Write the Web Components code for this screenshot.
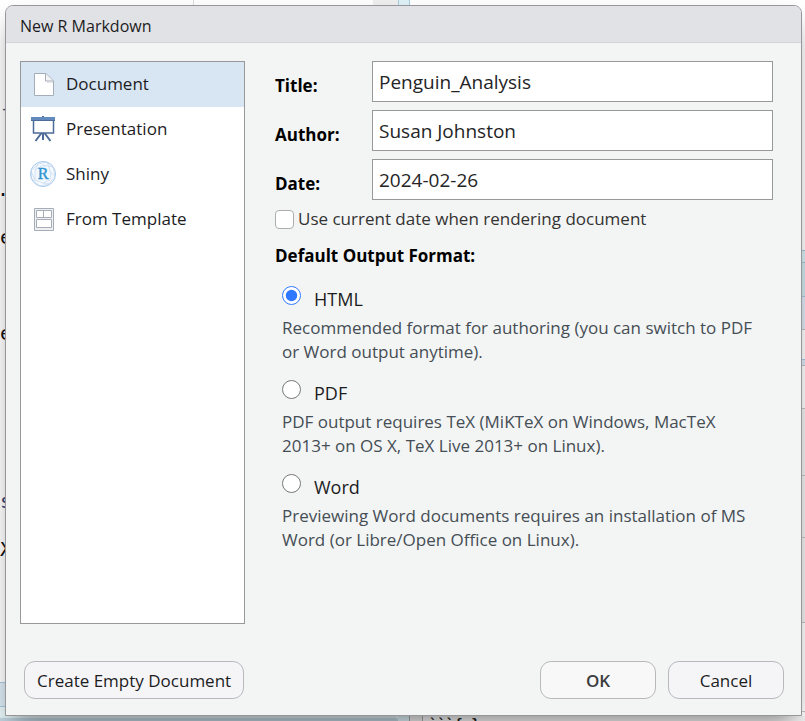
<!DOCTYPE html>
<html lang="en">
<head>
<meta charset="utf-8">
<title>New R Markdown</title>
<style>
html, body { height: 100%; margin: 0; }
body { font-family: "Open Sans", "Noto Sans", sans-serif; font-size: 17px; color: #1c1c1e; background: #fff; overflow: hidden; }
</style>
</head>
<body>
<app-window></app-window>
<script>
const define = (name, html, setup) => {
  const template = document.createElement('template');
  template.innerHTML = html;
  customElements.define(name, class extends HTMLElement {
    constructor() {
      super();
      this.attachShadow({ mode: 'open' }).append(template.content.cloneNode(true));
    }
    connectedCallback() { if (setup) setup(this, this.shadowRoot); }
  });
};

define('ide-backdrop', `
<style>
:host { display: grid; grid-template: 5px 1fr 5px / 6px 1fr 3px; overflow: hidden; background: #fff; }
.top, .bottom { grid-column: 1 / -1; display: flex; overflow: hidden; }
.top i, .bottom i, .right i { display: block; box-sizing: border-box; }
.code { font: 20px/24px "DejaVu Sans Mono", monospace; color: #111; white-space: pre; overflow: hidden; min-height: 0; display: flex; flex-direction: column; padding-top: 4px; }
.code span { display: block; height: 24px; flex: none; }
.code .kw { color: #3b4475; }
.code .dot { text-indent: -3px; }
.code .pane { flex: 1; border-top: 1px solid #a9c8df; background: #dcebf5; margin-top: 121px; }
.code .pane i { display: block; margin-top: 23px; border-top: 1px solid #a9c8df; background: #e6f5f6; height: 40px; }
.right { grid-column: 3; display: flex; flex-direction: column; min-height: 0; overflow: hidden; }
.right i { flex: none; border-top: 1px solid #c4c4c4; }
.bottom { font: bold 14px/16px "DejaVu Sans Mono", monospace; }
.bottom b { padding-left: 6px; border-left: 1px solid #aaa; flex: 1; background: #f4f4f4; color: #222; }
</style>
<div class="top"><i style="width:193px"></i><i style="width:180px;border-left:1px solid #ddd"></i><i style="width:25px;background:#efefef"></i><i style="width:12px;background:#dff2f8;border:solid #a9cddd;border-width:0 1px"></i></div>
<div class="code"><span></span><span></span><span></span><span></span><span class="kw">¯</span><span></span><span></span><span class="dot">.</span><span></span><span>e</span><span></span><span></span><span></span><span>e</span><span></span><span></span><span></span><span></span><span></span><span></span><span class="kw">s</span><span></span><span>X</span><div class="pane"><i></i></div></div>
<div class="right">
<i style="height:245px;border:0"></i><i style="height:12px;background:#d9f0f6;border-color:#9fc5d4"></i><i style="height:34px;background:#d0e8f0;border-color:#9fc5d4"></i><i style="height:33px;background:#dfeaf5;border-color:#a9c8df"></i><i style="height:30px"></i><i style="height:6px;background:#dceaf5;border-color:#a9c8df"></i><i style="height:43px"></i><i style="height:67px;background:#f2f2f2"></i><i style="height:62px;background:#f2f2f2"></i><i style="height:85px;background:#f2f2f2"></i><i style="height:89px"></i><i style="height:9px"></i>
</div>
<div class="bottom"><i style="width:398px;background:#bfd3df;border-top:2px solid #dff0f3;border-radius:0 4px 0 0"></i><i style="width:12px;background:#dff2f8;border-right:1px solid #aaa"></i><i style="width:12px;background:#eee"></i><b>\`\`\`{r}</b></div>
`);

define('app-window', `
<style>
:host { display: grid; height: 100%; }
ide-backdrop, .stage { grid-area: 1 / 1; min-width: 0; min-height: 0; }
.stage { display: grid; padding: 5px 3px 5px 5px; }
</style>
<ide-backdrop aria-hidden="true"></ide-backdrop>
<div class="stage">
  <modal-dialog>
    <span slot="title">New R Markdown</span>
    <template-list></template-list>
    <document-form></document-form>
    <push-button slot="start">Create Empty Document</push-button>
    <push-button slot="end" class="wide" primary>OK</push-button>
    <push-button slot="end" class="wide">Cancel</push-button>
  </modal-dialog>
</div>
`);

define('modal-dialog', `
<style>
:host { display: flex; flex-direction: column; box-sizing: border-box; border: 1px solid #97979b; border-radius: 8px 8px 0 0; background: #f3f5f4; box-shadow: 0 12px 24px -8px rgba(0,0,0,.5); overflow: hidden; }
header { background: #e1e2e6; border-bottom: 1px solid #d4d5d9; padding: 8px 14px 4px; }
h1 { margin: 0; font-size: 16px; line-height: 24px; font-weight: 400; }
main { flex: 1; display: grid; grid-template-columns: 225px 1fr; gap: 30px; padding: 18px 28px 0 14px; min-height: 0; }
footer { display: flex; justify-content: space-between; padding: 37px 17px 16px 18px; }
.group { display: flex; gap: 12px; }
::slotted(.wide) { width: 116px; }
</style>
<header><h1><slot name="title"></slot></h1></header>
<main><slot></slot></main>
<footer><div class="group"><slot name="start"></slot></div><div class="group"><slot name="end"></slot></div></footer>
`, (el) => { el.setAttribute('role', 'dialog'); });

define('push-button', `
<style>
:host { display: block; }
button { width: 100%; height: 38px; padding: 0 12px; border: 1px solid #b9b9bd; border-radius: 11px; background: #f5f5f8; font: inherit; color: #1c1c1e; white-space: nowrap; }
:host([primary]) button { background: #f8f8f8; font-weight: 600; color: #3c3c3e; }
</style>
<button type="button"><slot></slot></button>
`);

define('list-option', `
<style>
:host { display: block; }
button { display: flex; align-items: center; gap: 9px; width: 100%; height: 45px; padding: 0 8px 2px; border: 0; background: none; font: inherit; color: inherit; text-align: left; }
:host([selected]) button { background: #d8e6f3; }
::slotted(svg) { display: block; width: 28px; height: 28px; flex: none; }
</style>
<button type="button"><slot name="icon"></slot><slot></slot></button>
`);

define('template-list', `
<style>
:host { display: block; box-sizing: border-box; border: 1px solid #98989a; background: #fff; min-height: 0; overflow: hidden; }
</style>
<list-option selected>
  <svg slot="icon" viewBox="0 0 28 28" fill="none"><path d="M5.500 3.500H17L24.500 11V25.500H5.500Z" fill="#fff" stroke="#a5adb9"/><path d="M16.500 4V11H24" fill="#f4f5f7" stroke="#a5adb9"/><path d="M18 12.500H24" stroke="#e3e5e9"/></svg>
  Document</list-option>
<list-option>
  <svg slot="icon" viewBox="0 0 28 28" fill="none"><path d="M14 1V4M12.500 18L6.500 26M15.500 18L21.500 26M14 18V25" stroke="#4d6b99" stroke-width="2"/><rect x="4.500" y="4" width="20" height="14" fill="#fff" stroke="#4d6b99" stroke-width="1.500"/><path d="M2 3.500H26" stroke="#628abd" stroke-width="3"/><path d="M2 5.500H26" stroke="#4d6b99"/></svg>
  Presentation</list-option>
<list-option>
  <svg slot="icon" viewBox="0 0 28 28" fill="none"><circle cx="14" cy="14" r="12.500" fill="#f7fafe" stroke="#a6c7ea"/><path d="M2 11L9 4L18 2L24 7L26 16L20 24L11 26L3 19ZM9 4L6 10L6 20L14 23L21 20L22 13L18 2M6 10L14 5L22 13L26 16M14 5L24 7M14 23L20 24M2 11L6 20" stroke="#bad2ec" stroke-width=".6"/><circle cx="14" cy="14" r="7" fill="#f0f7fd"/><text x="14" y="19" text-anchor="middle" font-family="Liberation Serif, serif" font-size="16" fill="#2e93d0" stroke="#2e93d0" stroke-width=".4">R</text></svg>
  Shiny</list-option>
<list-option>
  <svg slot="icon" viewBox="0 0 28 28" fill="none" stroke="#a5adb9"><path d="M5.500 3.500H24.500V25.500H5.500Z" fill="#f0f0f3"/><path d="M7.500 5.500H14.500V12.500H7.500ZM14.500 5.500H22.500V12.500H14.500ZM7.500 14.500H22.500V22.500H7.500Z" fill="#fff"/></svg>
  From Template</list-option>
`);

define('text-field', `
<style>
:host { display: grid; grid-template-columns: 97px 1fr; }
label { font-weight: 700; font-size: 17px; line-height: 24px; padding-top: 13px; color: #000; }
input { box-sizing: border-box; width: 100%; min-width: 0; height: 41px; padding: 1px 6px 0; border: 1px solid #98989a; border-radius: 0; background: #fff; font: inherit; font-size: 19px; color: #242426; outline: none; }
</style>
<label for="field"></label><input id="field" type="text">
`, (el, root) => {
  root.querySelector('label').textContent = el.getAttribute('label');
  root.querySelector('input').value = el.getAttribute('value');
});

define('check-field', `
<style>
:host { display: flex; align-items: center; gap: 4px; }
input { appearance: none; box-sizing: border-box; flex: none; width: 19px; height: 19px; margin: 0; border: 1px solid #adadaf; border-radius: 4px; background: #fff; }
label { line-height: 24px; color: #333; }
</style>
<input id="check" type="checkbox"><label for="check"><slot></slot></label>
`);

define('format-options', `
<style>
:host { display: block; }
fieldset { margin: 0; padding: 0; border: 0; min-width: 0; }
legend { padding: 0; font-weight: 700; line-height: 24px; color: #000; }
.list { display: grid; gap: 16px; padding: 18px 16px 0 7px; }
.option { display: grid; grid-template-columns: 19px 1fr; column-gap: 13px; }
input { width: 19px; height: 19px; margin: 0; accent-color: #2f78ff; }
label { font-size: 18px; line-height: 26px; padding-bottom: 4px; }
p { grid-column: 1 / -1; margin: 0; font-size: 17px; line-height: 24px; color: #454d55; }
</style>
<fieldset>
  <legend>Default Output Format:</legend>
  <div class="list">
    <div class="option"><input type="radio" name="format" id="html" checked><label for="html">HTML</label><p>Recommended format for authoring (you can switch to PDF or Word output anytime).</p></div>
    <div class="option"><input type="radio" name="format" id="pdf"><label for="pdf">PDF</label><p>PDF output requires TeX (MiKTeX on Windows, MacTeX 2013+ on OS X, TeX Live 2013+ on Linux).</p></div>
    <div class="option"><input type="radio" name="format" id="word"><label for="word">Word</label><p>Previewing Word documents requires an installation of MS Word (or Libre/Open Office on Linux).</p></div>
  </div>
</fieldset>
`);

define('document-form', `
<style>
:host { display: block; min-width: 0; }
.fields { display: grid; gap: 8px; }
check-field { margin: 7px 0 13px; }
</style>
<div class="fields">
  <text-field label="Title:" value="Penguin_Analysis"></text-field>
  <text-field label="Author:" value="Susan Johnston"></text-field>
  <text-field label="Date:" value="2024-02-26"></text-field>
</div>
<check-field>Use current date when rendering document</check-field>
<format-options></format-options>
`);
</script>
</body>
</html>
